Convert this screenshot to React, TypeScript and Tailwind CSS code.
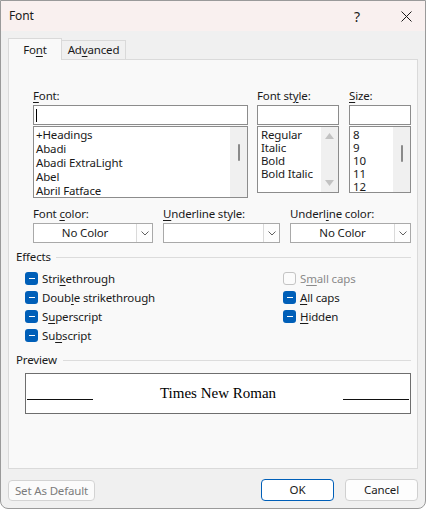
import React from "react";

function U({ children }: { children: React.ReactNode }) {
  return <span className="underline underline-offset-[2px] decoration-[1px]">{children}</span>;
}

function Check({ disabled }: { disabled?: boolean }) {
  if (disabled) {
    return <div className="w-[13px] h-[13px] rounded-[3px] border border-[#c4c4c4] bg-[#fbfbfb]" />;
  }
  return (
    <div className="w-[13px] h-[13px] rounded-[3px] bg-[#005fb8] flex items-center justify-center">
      <div className="w-[6px] h-[1.5px] bg-white" />
    </div>
  );
}

function Dropdown({ width, value }: { width: string; value?: string }) {
  return (
    <div className={`${width} h-[20px] mt-[1px] bg-white border border-[#a9a9a9] flex items-center`}>
      <div className="flex-1 text-center leading-[18px]">{value}</div>
      <div className="w-[16px] h-[18px] border-l border-[#dadada] bg-[#fdfdfd] flex items-center justify-center">
        <svg width="8" height="5" viewBox="0 0 8 5" fill="none">
          <path d="M0.5 0.5 L4 4 L7.5 0.5" stroke="#606060" strokeWidth="1" />
        </svg>
      </div>
    </div>
  );
}

export default function App() {
  const fonts = ["+Headings", "Abadi", "Abadi ExtraLight", "Abel", "Abril Fatface"];
  const styles = ["Regular", "Italic", "Bold", "Bold Italic"];
  const sizes = ["8", "9", "10", "11", "12"];

  return (
    <div className="w-[427px] h-[510px] bg-white font-['Noto_Sans',sans-serif] text-[11.5px] tracking-[-0.15px] text-[#1a1a1a]">
      <div className="w-[426px] h-[509px] border border-[#9a9a9a] rounded-b-[8px] overflow-hidden flex flex-col bg-[#f0f0f0]">
        {/* title bar */}
        <div className="h-[30px] bg-[#f9f0ef] flex items-center pl-[8px] shrink-0 text-[12px]">
          <span>Font</span>
          <span className="ml-auto text-[14px] w-[10px] text-center">?</span>
          <div className="ml-[38px] mr-[13px] w-[12px] h-[12px] flex items-center justify-center">
            <svg width="11" height="11" viewBox="0 0 11 11">
              <path d="M0.5 0.5 L10.5 10.5 M10.5 0.5 L0.5 10.5" stroke="#1a1a1a" strokeWidth="1" />
            </svg>
          </div>
        </div>

        <div className="flex-1 px-[7px]">
          {/* tabs */}
          <div className="flex items-end pt-[7px]">
            <div className="w-[54px] h-[22px] bg-[#f9f9f9] border border-b-0 border-[#d9d9d9] -mb-[1px] relative z-10 flex items-center justify-center">
              Fo<U>n</U>t
            </div>
            <div className="w-[64px] h-[19px] bg-[#f0f0f0] border border-b-0 border-l-0 border-[#d9d9d9] flex items-center justify-center">
              Ad<U>v</U>anced
            </div>
          </div>

          {/* panel */}
          <div className="w-[410px] h-[410px] bg-[#f9f9f9] border border-[#dadada]">
            <div className="flex items-start pl-[24px] pt-[28px]">
              <div className="w-[215px]">
                <div className="h-[16px] leading-[16px]"><U>F</U>ont:</div>
                <div className="h-[20px] mt-[1px] bg-white border border-[#8c8c8c] flex items-center pl-[2px]">
                  <div className="w-[1px] h-[13px] bg-black" />
                </div>
                <div className="h-[72px] mt-[1px] bg-white border border-[#8c8c8c] flex">
                  <div className="flex-1 pl-[2px] pt-[1px]">
                    {fonts.map((f) => (
                      <div key={f} className="h-[14px] leading-[14px] whitespace-nowrap">{f}</div>
                    ))}
                  </div>
                  <div className="w-[17px] bg-[#f0f0f0] flex justify-center">
                    <div className="w-[2px] h-[17px] mt-[17px] bg-[#8a8a8a] rounded-full" />
                  </div>
                </div>
              </div>

              <div className="w-[82px] ml-[9px]">
                <div className="h-[16px] leading-[16px]">Font st<U>y</U>le:</div>
                <div className="h-[20px] mt-[1px] bg-white border border-[#8c8c8c]" />
                <div className="h-[67px] mt-[1px] bg-white border border-[#8c8c8c] flex">
                  <div className="flex-1 pl-[3px] pt-[1px]">
                    {styles.map((s) => (
                      <div key={s} className="h-[13px] leading-[13px] whitespace-nowrap">{s}</div>
                    ))}
                  </div>
                  <div className="w-[17px] bg-[#f0f0f0] flex flex-col items-center justify-between py-[6px]">
                    <svg width="9" height="6" viewBox="0 0 9 6"><path d="M0 6 L4.5 0 L9 6 Z" fill="#c2c2c2" /></svg>
                    <svg width="9" height="6" viewBox="0 0 9 6"><path d="M0 0 L4.5 6 L9 0 Z" fill="#c2c2c2" /></svg>
                  </div>
                </div>
              </div>

              <div className="w-[62px] ml-[10px]">
                <div className="h-[16px] leading-[16px]"><U>S</U>ize:</div>
                <div className="h-[20px] mt-[1px] bg-white border border-[#8c8c8c]" />
                <div className="h-[67px] mt-[1px] bg-white border border-[#8c8c8c] flex">
                  <div className="flex-1 pl-[3px] pt-[1px] overflow-hidden">
                    {sizes.map((s) => (
                      <div key={s} className="h-[13px] leading-[13px]">{s}</div>
                    ))}
                  </div>
                  <div className="w-[17px] bg-[#f0f0f0] flex justify-center">
                    <div className="w-[2px] h-[17px] mt-[18px] bg-[#8a8a8a] rounded-full" />
                  </div>
                </div>
              </div>
            </div>

            {/* dropdowns */}
            <div className="flex pl-[24px] mt-[8px] gap-[10px]">
              <div>
                <div className="h-[16px] leading-[16px]">Font <U>c</U>olor:</div>
                <Dropdown width="w-[120px]" value="No Color" />
              </div>
              <div>
                <div className="h-[16px] leading-[16px]"><U>U</U>nderline style:</div>
                <Dropdown width="w-[117px]" />
              </div>
              <div>
                <div className="h-[16px] leading-[16px]">Underl<U>i</U>ne color:</div>
                <Dropdown width="w-[121px]" value="No Color" />
              </div>
            </div>

            {/* effects */}
            <div className="flex items-center pl-[7px] pr-[6px] mt-[6px] h-[16px]">
              <span>Effects</span>
              <div className="flex-1 h-[1px] bg-[#dcdcdc] ml-[5px]" />
            </div>
            <div className="flex pl-[16px] mt-[4px]">
              <div className="w-[258px]">
                <div className="h-[19px] flex items-center gap-[4px]"><Check /><span>Stri<U>k</U>ethrough</span></div>
                <div className="h-[19px] flex items-center gap-[4px]"><Check /><span>Doub<U>l</U>e strikethrough</span></div>
                <div className="h-[19px] flex items-center gap-[4px]"><Check /><span>S<U>u</U>perscript</span></div>
                <div className="h-[19px] flex items-center gap-[4px]"><Check /><span>Su<U>b</U>script</span></div>
              </div>
              <div>
                <div className="h-[19px] flex items-center gap-[4px] text-[#8a8a8a]"><Check disabled /><span>S<U>m</U>all caps</span></div>
                <div className="h-[19px] flex items-center gap-[4px]"><Check /><span><U>A</U>ll caps</span></div>
                <div className="h-[19px] flex items-center gap-[4px]"><Check /><span><U>H</U>idden</span></div>
              </div>
            </div>

            {/* preview */}
            <div className="flex items-center pl-[7px] pr-[6px] mt-[7px] h-[16px]">
              <span>Preview</span>
              <div className="flex-1 h-[1px] bg-[#dcdcdc] ml-[6px]" />
            </div>
            <div className="ml-[16px] mt-[5px] w-[386px] h-[41px] bg-white border border-[#6e6e6e] flex items-center justify-between px-[1px]">
              <div className="w-[66px] h-[1.5px] bg-[#111] mt-[12px]" />
              <span className="font-['Liberation_Serif',serif] text-[15px] tracking-normal leading-none text-black">Times New Roman</span>
              <div className="w-[66px] h-[1.5px] bg-[#111] mt-[12px]" />
            </div>
          </div>

          {/* buttons */}
          <div className="flex justify-between mt-[10px]">
            <div className="w-[87px] h-[21px] mt-[1px] rounded-[4px] border border-[#d3d3d3] bg-[#fbfbfb] text-[#7c7c7c] flex items-center justify-center">
              Set As Default
            </div>
            <div className="flex gap-[11px]">
              <div className="w-[73px] h-[22px] rounded-[4px] border border-[#005fb8] bg-white flex items-center justify-center">
                OK
              </div>
              <div className="w-[73px] h-[22px] rounded-[4px] border border-[#d0d0d0] bg-[#fdfdfd] flex items-center justify-center">
                Cancel
              </div>
            </div>
          </div>
        </div>
      </div>
    </div>
  );
}
